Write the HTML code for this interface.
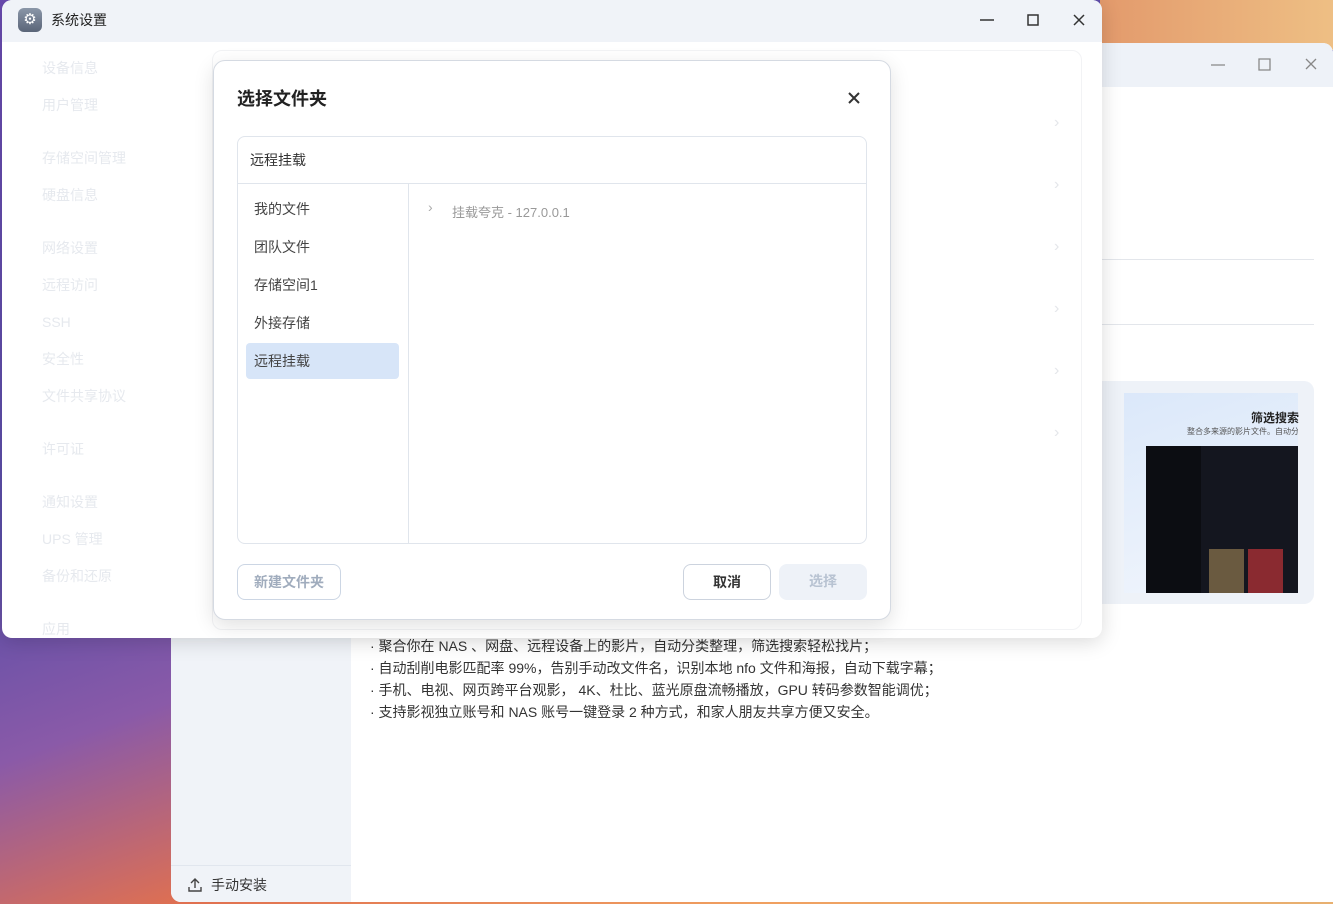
<!DOCTYPE html>
<html><head><meta charset="utf-8"><style>
*{box-sizing:border-box;margin:0;padding:0}
body{width:1333px;height:904px;overflow:hidden;position:relative;font-family:"Liberation Sans","Noto Sans CJK SC",sans-serif;background:#5a4aa0}
.abs{position:absolute}
.wall{left:0;top:0;width:1333px;height:904px;background:linear-gradient(160deg,#6a4bb0 0%,#5b4ea8 40%,#8a5aa8 55%,#e07050 70%,#f0a060 85%,#e8b070 100%)}
.topr{left:1100px;top:0;width:233px;height:50px;background:linear-gradient(90deg,#e39a6c,#eebf84)}
.back{left:171px;top:43px;width:1162px;height:859px;background:#fff;border-radius:10px 10px 0 10px;overflow:hidden}
.back .tb{left:0;top:0;width:1162px;height:44px;background:#eef2f8}
.back .side{left:0;top:44px;width:180px;height:815px;background:#f0f3f8}
.txt{font-size:14px;color:#333;line-height:22px}
.front{left:2px;top:0;width:1100px;height:638px;background:#fff;border-radius:10px;overflow:hidden;box-shadow:0 4px 20px rgba(0,0,0,.15)}
.front .tb{left:0;top:0;width:1100px;height:42px;background:#f0f3f8}
.fade{color:#e6e9ee;font-size:14px;white-space:nowrap;width:200px}
.fade div{white-space:nowrap}
.modal{left:213px;top:60px;width:678px;height:560px;background:#fff;border:1px solid #d5dae2;border-radius:12px;box-shadow:0 6px 20px rgba(0,0,0,.12)}
.btn{position:absolute;height:36px;border-radius:8px;font-size:14px;font-weight:bold;text-align:center;line-height:34px}
</style></head><body>
<div class="abs wall"></div>
<div class="abs topr"></div>
<div class="abs back">
 <div class="abs tb"></div>
 <svg class="abs" style="left:1040px;top:14px" width="120" height="16"><path d="M0 8h14" stroke="#888" stroke-width="1.3"/><path d="M48 2h11v11H48z" fill="none" stroke="#888" stroke-width="1.3"/><path d="M95 2l10 10M105 2l-10 10" stroke="#888" stroke-width="1.3"/></svg>
 <div class="abs side"></div>
 <div class="abs" style="left:0;top:822px;width:180px;border-top:1px solid #e1e6ee"></div>
 <svg class="abs" style="left:16px;top:834px" width="16" height="16"><path d="M8 11V2M4 6l4-4 4 4M2 10v4h12v-4" fill="none" stroke="#444" stroke-width="1.4"/></svg>
 <div class="abs txt" style="left:40px;top:831px">手动安装</div>
 <div class="abs" style="left:931px;top:216px;width:212px;border-top:1px solid #e3e6eb"></div>
 <div class="abs" style="left:931px;top:281px;width:212px;border-top:1px solid #e3e6eb"></div>
 <div class="abs" style="left:931px;top:338px;width:212px;height:223px;background:#eef2f8;border-radius:0 10px 10px 0"></div>
 <div class="abs" style="left:953px;top:350px;width:174px;height:200px;background:linear-gradient(160deg,#dbe8fa,#f2f6fc)"></div>
 <div class="abs" style="left:1080px;top:366px;font-size:12px;font-weight:bold;color:#222">筛选搜索</div>
 <div class="abs" style="left:1016px;top:383px;font-size:8px;color:#555;white-space:nowrap;width:111px;overflow:hidden">整合多来源的影片文件。自动分</div>
 <div class="abs" style="left:975px;top:403px;width:152px;height:147px;background:#14161f;border-radius:4px 0 0 0"></div>
 <div class="abs" style="left:975px;top:403px;width:55px;height:147px;background:#0c0d12"></div>
 <div class="abs" style="left:1038px;top:506px;width:35px;height:44px;background:#6a5a40"></div>
 <div class="abs" style="left:1077px;top:506px;width:35px;height:44px;background:#8a2a30"></div>
 <div class="abs txt" style="left:199px;top:592px;width:640px">· 聚合你在 NAS 、网盘、远程设备上的影片，自动分类整理，筛选搜索轻松找片；<br>· 自动刮削电影匹配率 99%，告别手动改文件名，识别本地 nfo 文件和海报，自动下载字幕；<br>· 手机、电视、网页跨平台观影， 4K、杜比、蓝光原盘流畅播放，GPU 转码参数智能调优；<br>· 支持影视独立账号和 NAS 账号一键登录 2 种方式，和家人朋友共享方便又安全。</div>
</div>
<div class="abs front">
 <div class="abs tb"></div>
 <div class="abs" style="left:16px;top:8px;width:24px;height:24px;border-radius:6px;background:linear-gradient(#8a96a8,#5a6578);color:#fff;font-size:15px;text-align:center;line-height:24px">⚙</div>
 <div class="abs" style="left:49px;top:10px;font-size:14px;color:#222">系统设置</div>
 <svg class="abs" style="left:978px;top:13px" width="110" height="16"><path d="M0 7h14" stroke="#333" stroke-width="1.5"/><path d="M48 2h10v10H48z" fill="none" stroke="#333" stroke-width="1.5"/><path d="M94 2l10 10M104 2l-10 10" stroke="#333" stroke-width="1.5"/></svg>
 <div class="abs fade" style="left:40px;top:58px;line-height:20px">
  <div style="position:absolute;top:0">设备信息</div><div style="position:absolute;top:37px">用户管理</div>
  <div style="position:absolute;top:90px">存储空间管理</div><div style="position:absolute;top:127px">硬盘信息</div>
  <div style="position:absolute;top:180px">网络设置</div><div style="position:absolute;top:217px">远程访问</div>
  <div style="position:absolute;top:254px">SSH</div><div style="position:absolute;top:291px">安全性</div>
  <div style="position:absolute;top:328px">文件共享协议</div><div style="position:absolute;top:381px">许可证</div>
  <div style="position:absolute;top:434px">通知设置</div><div style="position:absolute;top:471px">UPS 管理</div>
  <div style="position:absolute;top:508px">备份和还原</div><div style="position:absolute;top:561px">应用</div>
 </div>
 <div class="abs" style="left:210px;top:50px;width:870px;height:580px;border:1px solid #f2f3f5;border-radius:10px"></div>
 <div class="abs" style="left:1052px;top:92px;color:#e4e6ea;font-size:16px;line-height:62px">›<br>›<br>›<br>›<br>›<br>›</div>
</div>
<div class="abs modal">
 <div class="abs" style="left:23px;top:24px;font-size:18px;font-weight:bold;color:#222">选择文件夹</div>
 <svg class="abs" style="left:634px;top:31px" width="12" height="12"><path d="M1 1l10 10M11 1L1 11" stroke="#333" stroke-width="2"/></svg>
 <div class="abs" style="left:23px;top:75px;width:630px;height:408px;border:1px solid #e0e5ec;border-radius:8px">
  <div class="abs txt" style="left:12px;top:12px">远程挂载</div>
  <div class="abs" style="left:0;top:46px;width:628px;border-top:1px solid #e0e5ec"></div>
  <div class="abs" style="left:170px;top:46px;height:360px;border-left:1px solid #e0e5ec"></div>
  <div class="abs" style="left:8px;top:206px;width:153px;height:36px;background:#d7e5f8;border-radius:4px"></div>
  <div class="abs txt" style="left:16px;top:53px;color:#444;line-height:38px">我的文件<br>团队文件<br>存储空间1<br>外接存储<br>远程挂载</div>
  <div class="abs" style="left:190px;top:62px;color:#aaa;font-size:14px">›</div>
  <div class="abs" style="left:214px;top:65px;color:#999;font-size:13px">挂载夸克 - 127.0.0.1</div>
 </div>
 <div class="btn" style="left:23px;top:503px;width:104px;border:1px solid #ccd6e4;color:#a0acbd">新建文件夹</div>
 <div class="btn" style="left:469px;top:503px;width:88px;border:1px solid #ccd3de;color:#333">取消</div>
 <div class="btn" style="left:565px;top:503px;width:88px;background:#eef2f8;color:#b8c3d2">选择</div>
</div>
</body></html>
